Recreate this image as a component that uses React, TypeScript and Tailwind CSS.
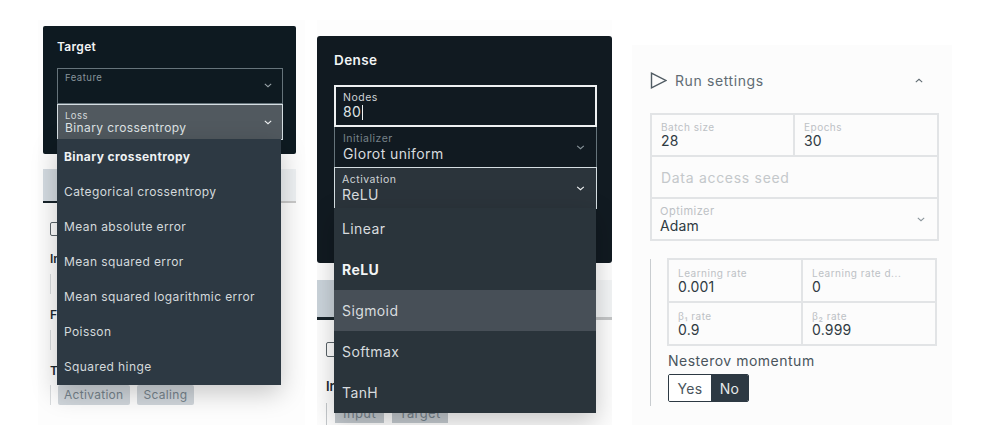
import React from "react";

const font = { fontFamily: "Inter, 'Noto Sans', sans-serif" };

function Chevron({ className, up }: { className: string; up?: boolean }) {
  return (
    <svg viewBox="0 0 10 6" className={className} fill="none" stroke="currentColor" strokeWidth="1.3">
      <path d={up ? "M1 5 L5 1.5 L9 5" : "M1 1 L5 4.5 L9 1"} />
    </svg>
  );
}

function SmallField({
  label,
  value,
  className,
}: {
  label: string;
  value?: string;
  className: string;
}) {
  return (
    <div className={"flex flex-col justify-center pl-[9px] " + className}>
      <span className="text-[10px] leading-[12px] tracking-[0.5px] text-[#bcc1c5]">{label}</span>
      <span className="text-[14px] leading-[16px] tracking-[0.2px] text-[#2f3a42]">{value}</span>
    </div>
  );
}

function TargetPanel() {
  const items = [
    "Binary crossentropy",
    "Categorical crossentropy",
    "Mean absolute error",
    "Mean squared error",
    "Mean squared logarithmic error",
    "Poisson",
    "Squared hinge",
  ];
  return (
    <div className="relative mt-[20px] ml-[38px] h-[405px] w-[267px] shrink-0 bg-[#fdfdfd] px-[5px] pt-[6px]">
      <div className="h-[128px] w-[253px] rounded-[2px] bg-[#0e1a21] px-[14px] pt-[14px]">
        <div className="text-[12px] leading-[14px] font-semibold tracking-[0.3px] text-[#f2f4f5]">Target</div>
        <div className="mt-[14px] flex h-[36px] w-[226px] justify-between border border-[#66747b] pr-[10px] pl-[7px] pt-[3px]">
          <span className="text-[9.5px] leading-[12px] tracking-[0.5px] text-[#88949a]">Feature</span>
          <Chevron className="mt-[11px] h-[5px] w-[8px] text-[#99a3a8]" />
        </div>
        <div className="flex h-[36px] w-[226px] items-center justify-between border border-[#d5dee2] bg-[#51595f] pr-[10px] pl-[7px]">
          <div className="flex flex-col">
            <span className="text-[9.5px] leading-[11px] tracking-[0.5px] text-[#d4d8da]">Loss</span>
            <span className="text-[12px] leading-[14px] tracking-[0.4px] text-[#dfe3e5]">Binary crossentropy</span>
          </div>
          <Chevron className="h-[5px] w-[8px] text-[#f2f4f5]" />
        </div>
      </div>

      <div className="mt-[15px] h-[34px] w-[253px] border-b-2 border-[#c9c9c9] bg-[#eef1f3]">
        <div className="h-[34px] w-[14px] border-b-2 border-[#17232a] bg-[#d3dae0]" />
      </div>

      <div className="mt-[19px] ml-[7px] h-[14px] w-[14px] rounded-[2px] border border-[#5a6369]" />
      <div className="mt-[16px] ml-[7px] text-[12px] leading-[14px] font-semibold text-[#1d2930]">In</div>
      <div className="mt-[8px] ml-[7px] h-[20px] w-px bg-[#d9dcde]" />
      <div className="mt-[14px] ml-[7px] text-[12px] leading-[14px] font-semibold text-[#1d2930]">F</div>
      <div className="mt-[8px] ml-[7px] h-[20px] w-px bg-[#d9dcde]" />
      <div className="mt-[14px] ml-[7px] text-[12px] leading-[14px] font-semibold text-[#1d2930]">T</div>
      <div className="mt-[7px] ml-[7px] flex items-center">
        <div className="h-[20px] w-px bg-[#d9dcde]" />
        <div className="ml-[7px] flex gap-[7px]">
          <span className="h-[20px] rounded-[2px] bg-[#d0d6db] px-[6px] text-[12px] leading-[20px] tracking-[0.3px] text-[#76838c]">Activation</span>
          <span className="h-[20px] rounded-[2px] bg-[#d0d6db] px-[7px] text-[12px] leading-[20px] tracking-[0.3px] text-[#76838c]">Scaling</span>
        </div>
      </div>

      <div className="absolute top-[119px] left-[19px] w-[224px] bg-[#2d3943] pb-px shadow-[0_8px_24px_rgba(0,0,0,0.22)]">
        {items.map((t, i) => (
          <div
            key={t}
            className={
              "flex h-[35px] items-center pl-[7px] text-[12px] tracking-[0.4px] " +
              (i === 0 ? "font-bold text-[#eef1f2]" : "text-[#d4d9dc]")
            }
          >
            {t}
          </div>
        ))}
      </div>
    </div>
  );
}

function DensePanel() {
  const items = ["Linear", "ReLU", "Sigmoid", "Softmax", "TanH"];
  return (
    <div className="relative mt-[20px] ml-[12px] h-[405px] w-[295px] shrink-0 overflow-hidden bg-[#fdfdfd] pt-[16px]">
      <div className="h-[227px] w-[295px] rounded-[3px] bg-[#111a21] px-[17px] pt-[16px]">
        <div className="text-[13.5px] leading-[16px] font-semibold tracking-[0.4px] text-[#f2f4f5]">Dense</div>
        <div className="mt-[17px] flex h-[42px] w-[263px] flex-col justify-center border-2 border-[#eef1f2] pl-[7px]">
          <span className="text-[10.5px] leading-[12px] tracking-[0.5px] text-[#cfd3d6]">Nodes</span>
          <span className="flex items-center text-[14px] leading-[16px] tracking-[0.3px] text-[#dfe3e5]">
            80<span className="ml-px inline-block h-[15px] w-px bg-[#eef1f2]" />
          </span>
        </div>
        <div className="flex h-[40px] w-[263px] items-center justify-between border-x border-[#66747b] pr-[11px] pl-[8px]">
          <div className="flex flex-col">
            <span className="text-[10.5px] leading-[12px] tracking-[0.5px] text-[#778289]">Initializer</span>
            <span className="text-[14px] leading-[17px] tracking-[0.4px] text-[#d8dcdf]">Glorot uniform</span>
          </div>
          <Chevron className="h-[5px] w-[9px] text-[#88949a]" />
        </div>
        <div className="flex h-[42px] w-[263px] items-center justify-between border border-[#d5dee2] bg-[#2b343b] pr-[11px] pl-[7px]">
          <div className="flex flex-col">
            <span className="text-[10.5px] leading-[12px] tracking-[0.5px] text-[#cfd3d6]">Activation</span>
            <span className="text-[14px] leading-[17px] tracking-[0.4px] text-[#d8dcdf]">ReLU</span>
          </div>
          <Chevron className="h-[5px] w-[9px] text-[#f2f4f5]" />
        </div>
      </div>

      <div className="mt-[17px] h-[40px] w-[295px] border-b-[3px] border-[#c4c6c7] bg-[#f3f5f6]">
        <div className="h-[40px] w-[17px] border-b-[3px] border-[#17232a] bg-[#cbd4db]" />
      </div>

      <div className="mt-[22px] ml-[9px] h-[15px] w-[15px] rounded-[2px] border border-[#5a6369]" />
      <div className="mt-[21px] ml-[9px] text-[13px] leading-[16px] font-semibold text-[#1d2930]">In</div>
      <div className="mt-[9px] ml-[9px] flex">
        <div className="h-[22px] w-px bg-[#c5c9cc]" />
        <div className="ml-[8px] flex gap-[8px]">
          <span className="h-[20px] bg-[#c3c9ce] px-[8px] text-[13px] leading-[20px] tracking-[0.4px] text-[#76838c]">Input</span>
          <span className="h-[20px] bg-[#c3c9ce] px-[7px] text-[13px] leading-[20px] tracking-[0.4px] text-[#76838c]">Target</span>
        </div>
      </div>

      <div className="absolute top-[188px] left-[17px] w-[262px] bg-[#2a343b] shadow-[0_8px_24px_rgba(0,0,0,0.22)]">
        {items.map((t) => (
          <div
            key={t}
            className={
              "flex h-[41px] items-center pl-[8px] text-[14px] tracking-[0.4px] " +
              (t === "ReLU"
                ? "font-bold text-[#f2f4f5]"
                : t === "Sigmoid"
                  ? "bg-[#474f57] text-[#d8dcdf]"
                  : "text-[#d8dcdf]")
            }
          >
            {t}
          </div>
        ))}
      </div>
    </div>
  );
}

function RunPanel() {
  return (
    <div className="mt-[45px] ml-[20px] h-[380px] w-[320px] shrink-0 bg-[#fcfcfc] pl-[18px]">
      <div className="flex h-[68px] w-[288px] items-center justify-between pt-[2px] pr-[15px]">
        <div className="flex items-center gap-[8px]">
          <svg viewBox="0 0 17 17" className="h-[17px] w-[17px] text-[#515c64]" fill="none" stroke="currentColor" strokeWidth="1.4">
            <path d="M1.5 1.2 L15.8 8.5 L1.5 15.8 Z" />
          </svg>
          <span className="text-[14px] tracking-[0.6px] text-[#616c74]">Run settings</span>
        </div>
        <Chevron up className="h-[5px] w-[8px] text-[#5f6a71]" />
      </div>

      <div className="w-[289px] border-2 border-b-0 border-[#e2e4e6]">
        <div className="flex h-[42px] border-b-2 border-[#e2e4e6]">
          <SmallField label="Batch size" value="28" className="w-[143px] border-r-2 border-[#e2e4e6]" />
          <SmallField label="Epochs" value="30" className="flex-1" />
        </div>
        <div className="flex h-[42px] items-center border-b-2 border-[#e2e4e6] pl-[9px] text-[14px] tracking-[0.7px] text-[#c4c8cb]">
          Data access seed
        </div>
        <div className="flex h-[42px] items-center justify-between border-b-2 border-[#e2e4e6] pr-[12px] pl-[8px]">
          <div className="flex flex-col">
            <span className="text-[11px] leading-[12px] tracking-[0.5px] text-[#bcc1c5]">Optimizer</span>
            <span className="text-[14px] leading-[17px] tracking-[0.1px] text-[#2f3a42]">Adam</span>
          </div>
          <Chevron className="h-[5px] w-[8px] text-[#8a949b]" />
        </div>
      </div>

      <div className="mt-[17px] flex">
        <div className="mt-px h-[147px] w-px bg-[#c9cdd0]" />
        <div className="ml-[16px]">
          <div className="w-[270px] border-2 border-b-0 border-[#e2e4e6]">
            <div className="flex h-[43px] border-b-2 border-[#e2e4e6]">
              <SmallField label="Learning rate" value="0.001" className="w-[134px] border-r-2 border-[#e2e4e6]" />
              <SmallField label="Learning rate d..." value="0" className="flex-1" />
            </div>
            <div className="flex h-[43px] border-b-2 border-[#e2e4e6]">
              <SmallField label="β₁ rate" value="0.9" className="w-[134px] border-r-2 border-[#e2e4e6]" />
              <SmallField label="β₂ rate" value="0.999" className="flex-1" />
            </div>
          </div>
          <div className="mt-[6px] ml-px text-[14px] leading-[17px] tracking-[0.5px] text-[#4a555d]">Nesterov momentum</div>
          <div className="mt-[5px] ml-px flex h-[28px] w-[81px] overflow-hidden rounded-[2px] border border-[#2d3943] text-[14px] tracking-[0.3px]">
            <span className="flex w-[42px] items-center justify-center bg-white text-[#4a555d]">Yes</span>
            <span className="flex flex-1 items-center justify-center bg-[#2d3943] text-[#e6e9eb]">No</span>
          </div>
        </div>
      </div>
    </div>
  );
}

export default function App() {
  return (
    <div className="flex h-[446px] w-[986px] items-start overflow-hidden bg-white" style={font}>
      <TargetPanel />
      <DensePanel />
      <RunPanel />
    </div>
  );
}
